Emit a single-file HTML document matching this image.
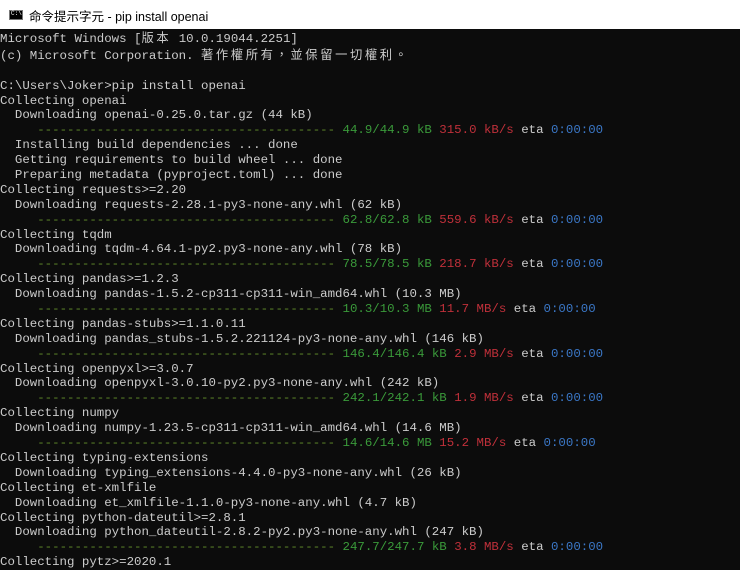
<!DOCTYPE html>
<html><head><meta charset="utf-8"><style>
html,body{margin:0;padding:0;width:740px;height:565px;overflow:hidden;background:#0c0c0c}
.title{position:absolute;left:0;top:0;width:740px;height:29px;background:#fff;font-family:"Liberation Sans","Noto Sans CJK TC",sans-serif;font-size:12.5px;color:#000}
.title .ic{position:absolute;left:9px;top:10px;width:14px;height:10px;background:#000;border:1px solid #777;box-sizing:border-box}
.title .ic:after{content:"C:\\";position:absolute;left:1px;top:-1px;font-size:6px;color:#fff;font-family:"Liberation Mono",monospace}
.title .t{position:absolute;left:29px;top:6px}
pre{position:absolute;left:0;top:30px;margin:0;font-family:"Liberation Mono","Noto Sans CJK TC",monospace;font-size:12.42px;line-height:14.886px;color:#cccccc;white-space:pre}
.c{font-family:"Noto Sans CJK TC",sans-serif;letter-spacing:2.6px;font-size:12.3px}
.d{color:#5f8a2a}.g{color:#3a9a3a}.r{color:#c0303a}.b{color:#3b78c8}
</style></head><body>
<div class="title"><div class="ic"></div><div class="t">命令提示字元 - pip  install openai</div></div>
<pre>Microsoft Windows [<span class="c">版本</span> 10.0.19044.2251]
(c) Microsoft Corporation. <span class="c">著作權所有，並保留一切權利。</span>

C:\Users\Joker&gt;pip install openai
Collecting openai
  Downloading openai-0.25.0.tar.gz (44 kB)
     <span class="d">----------------------------------------</span> <span class="g">44.9/44.9 kB</span> <span class="r">315.0 kB/s</span> eta <span class="b">0:00:00</span>
  Installing build dependencies ... done
  Getting requirements to build wheel ... done
  Preparing metadata (pyproject.toml) ... done
Collecting requests&gt;=2.20
  Downloading requests-2.28.1-py3-none-any.whl (62 kB)
     <span class="d">----------------------------------------</span> <span class="g">62.8/62.8 kB</span> <span class="r">559.6 kB/s</span> eta <span class="b">0:00:00</span>
Collecting tqdm
  Downloading tqdm-4.64.1-py2.py3-none-any.whl (78 kB)
     <span class="d">----------------------------------------</span> <span class="g">78.5/78.5 kB</span> <span class="r">218.7 kB/s</span> eta <span class="b">0:00:00</span>
Collecting pandas&gt;=1.2.3
  Downloading pandas-1.5.2-cp311-cp311-win_amd64.whl (10.3 MB)
     <span class="d">----------------------------------------</span> <span class="g">10.3/10.3 MB</span> <span class="r">11.7 MB/s</span> eta <span class="b">0:00:00</span>
Collecting pandas-stubs&gt;=1.1.0.11
  Downloading pandas_stubs-1.5.2.221124-py3-none-any.whl (146 kB)
     <span class="d">----------------------------------------</span> <span class="g">146.4/146.4 kB</span> <span class="r">2.9 MB/s</span> eta <span class="b">0:00:00</span>
Collecting openpyxl&gt;=3.0.7
  Downloading openpyxl-3.0.10-py2.py3-none-any.whl (242 kB)
     <span class="d">----------------------------------------</span> <span class="g">242.1/242.1 kB</span> <span class="r">1.9 MB/s</span> eta <span class="b">0:00:00</span>
Collecting numpy
  Downloading numpy-1.23.5-cp311-cp311-win_amd64.whl (14.6 MB)
     <span class="d">----------------------------------------</span> <span class="g">14.6/14.6 MB</span> <span class="r">15.2 MB/s</span> eta <span class="b">0:00:00</span>
Collecting typing-extensions
  Downloading typing_extensions-4.4.0-py3-none-any.whl (26 kB)
Collecting et-xmlfile
  Downloading et_xmlfile-1.1.0-py3-none-any.whl (4.7 kB)
Collecting python-dateutil&gt;=2.8.1
  Downloading python_dateutil-2.8.2-py2.py3-none-any.whl (247 kB)
     <span class="d">----------------------------------------</span> <span class="g">247.7/247.7 kB</span> <span class="r">3.8 MB/s</span> eta <span class="b">0:00:00</span>
Collecting pytz&gt;=2020.1</pre>
</body></html>
